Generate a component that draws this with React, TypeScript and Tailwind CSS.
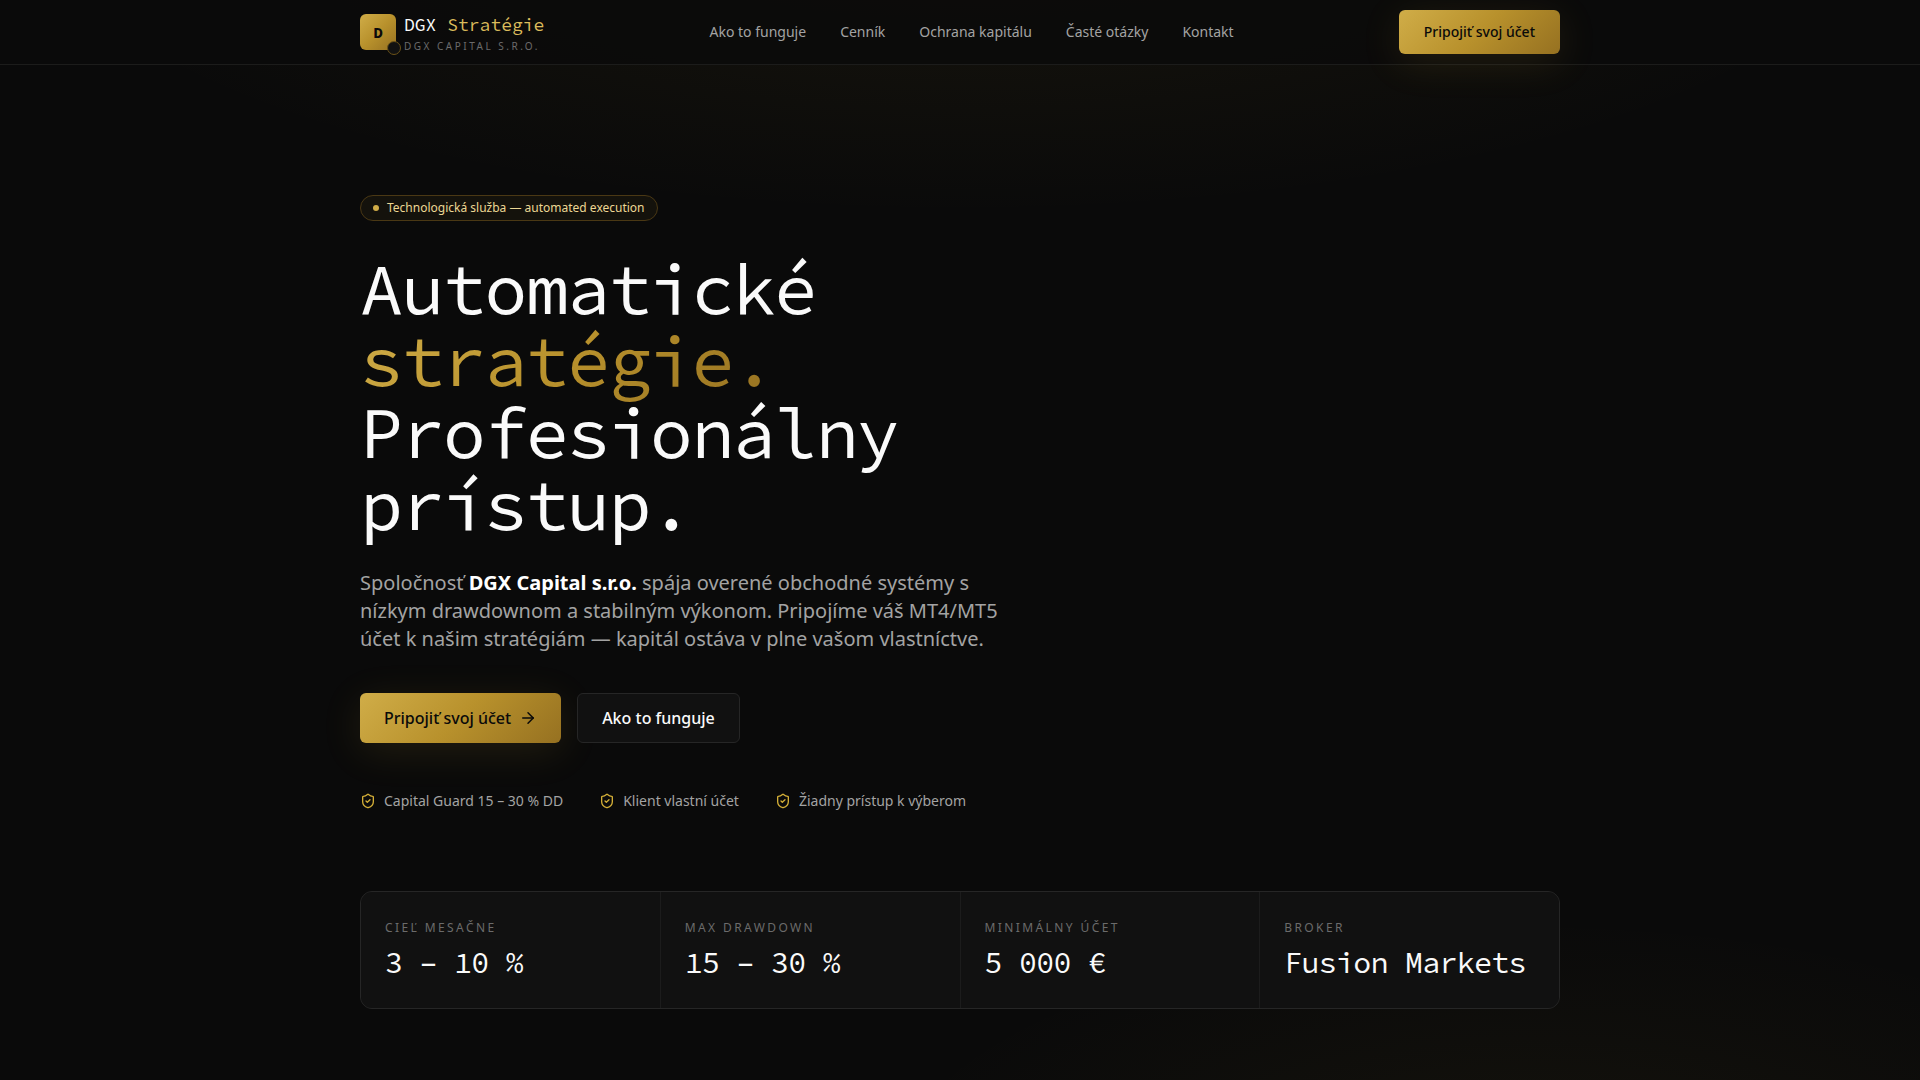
import { ArrowRight, ShieldCheck } from 'lucide-react';
import clsx from 'clsx';
import type { ReactNode } from 'react';

type Stat = {
  label: string;
  value: string;
};

const navLinks = [
  { href: '#ako-to-funguje', label: 'Ako to funguje' },
  { href: '#cennik', label: 'Cenník' },
  { href: '#ochrana-kapitalu', label: 'Ochrana kapitálu' },
  { href: '#caste-otazky', label: 'Časté otázky' },
  { href: '#kontakt', label: 'Kontakt' },
];

const guarantees = [
  'Capital Guard 15 – 30 % DD',
  'Klient vlastní účet',
  'Žiadny prístup k výberom',
];

const stats: Stat[] = [
  { label: 'Cieľ mesačne', value: '3 – 10 %' },
  { label: 'Max drawdown', value: '15 – 30 %' },
  { label: 'Minimálny účet', value: '5 000 €' },
  { label: 'Broker', value: 'Fusion Markets' },
];

const mono = 'font-["Source_Code_Pro","DejaVu_Sans_Mono",monospace]';
const gold = 'bg-[linear-gradient(135deg,#d0ad48,#b8912c_50%,#967121)]';

function GoldButton({
  className,
  children,
}: {
  className?: string;
  children: ReactNode;
}) {
  return (
    <button
      type="button"
      className={clsx(
        'inline-flex items-center justify-center gap-2 rounded-md font-medium text-[#0a0a0a]',
        'shadow-[0_8px_40px_rgba(212,175,55,0.12)]',
        gold,
        className
      )}
    >
      {children}
    </button>
  );
}

function Brand() {
  return (
    <a href="#" className="flex items-center gap-2">
      <span
        className={clsx(
          'relative flex size-9 items-center justify-center rounded-md text-base font-bold text-[#0a0a0a]',
          mono,
          gold
        )}
      >
        D
        <span className="absolute -right-[5px] -bottom-[5px] size-3.5 rounded-full border border-[#6b5218] bg-[#111111]" />
      </span>
      <span className="flex flex-col gap-px pt-[3px]">
        <span className={clsx('text-lg leading-6 text-[#fafafa]', mono)}>
          DGX <span className="text-[#dcbc5c]">Stratégie</span>
        </span>
        <span className="text-[10px] leading-4 tracking-[0.25em] text-[#6b6b6b] uppercase">
          DGX Capital s.r.o.
        </span>
      </span>
    </a>
  );
}

function Header() {
  return (
    <header className="sticky top-0 z-10 border-b border-[#1c1c1b] bg-[#0a0a0a]/80">
      <div className="mx-auto flex h-16 max-w-[1248px] items-center justify-between px-6">
        <Brand />
        <nav className="flex gap-[34px] text-sm text-[#a3a3a3]">
          {navLinks.map(({ href, label }) => (
            <a key={href} href={href}>
              {label}
            </a>
          ))}
        </nav>
        <GoldButton className="h-11 px-[25px] text-sm">
          Pripojiť svoj účet
        </GoldButton>
      </div>
    </header>
  );
}

function StatCard({ label, value }: Stat) {
  return (
    <div className="bg-[#111111] px-6 py-7">
      <dt className="text-xs tracking-[0.2em] text-[#6b6b6b] uppercase">
        {label}
      </dt>
      <dd className={clsx('mt-2 text-3xl tracking-tight text-[#fafafa]', mono)}>
        {value}
      </dd>
    </div>
  );
}

export default function App() {
  return (
    <div
      className={clsx(
        'min-h-screen bg-[#0a0a0a] font-["Noto_Sans",sans-serif] text-[#fafafa]',
        'bg-[radial-gradient(ellipse_50%_30%_at_50%_-10%,rgba(212,175,55,0.075),transparent),radial-gradient(ellipse_35%_25%_at_80%_110%,rgba(212,175,55,0.055),transparent)]'
      )}
    >
      <Header />

      <main className="mx-auto max-w-[1248px] px-6 pt-[130px] pb-16">
        <p className="flex w-fit items-center gap-2 rounded-full border border-[#4a3814] bg-[#14120c] px-3 py-1 text-xs text-[#ecd794]">
          <span className="size-1.5 rounded-full bg-[#d0ac47]" />
          Technologická služba — automated execution
        </p>

        <h1
          className={clsx(
            'mt-8 max-w-2xl text-7xl leading-none tracking-tight',
            mono
          )}
        >
          Automatické
          <br />
          <span className={clsx('bg-clip-text text-transparent', gold)}>
            stratégie.
          </span>
          <br />
          Profesionálny prístup.
        </h1>

        <p className="mt-7 max-w-2xl text-xl leading-7 text-[#a3a3a3]">
          Spoločnosť <strong className="text-white">DGX Capital s.r.o.</strong>{' '}
          spája overené obchodné systémy s nízkym drawdownom a stabilným
          výkonom. Pripojíme váš MT4/MT5 účet k našim stratégiám — kapitál
          ostáva v plne vašom vlastníctve.
        </p>

        <div className="mt-10 flex gap-4">
          <GoldButton className="h-[50px] px-6">
            Pripojiť svoj účet
            <ArrowRight className="size-4.5" />
          </GoldButton>
          <button
            type="button"
            className="h-[50px] rounded-md border border-[#262626] bg-[#111111] px-6 font-medium"
          >
            Ako to funguje
          </button>
        </div>

        <ul className="mt-12 flex flex-wrap gap-9 text-sm text-[#a3a3a3]">
          {guarantees.map((text) => (
            <li key={text} className="flex items-center gap-2">
              <ShieldCheck className="size-4 text-[#d4af37]" />
              {text}
            </li>
          ))}
        </ul>

        <dl className="mt-20 grid grid-cols-4 gap-px overflow-hidden rounded-xl border border-[#262626] bg-[#1c1c1c]">
          {stats.map((stat) => (
            <StatCard key={stat.label} {...stat} />
          ))}
        </dl>
      </main>
    </div>
  );
}
